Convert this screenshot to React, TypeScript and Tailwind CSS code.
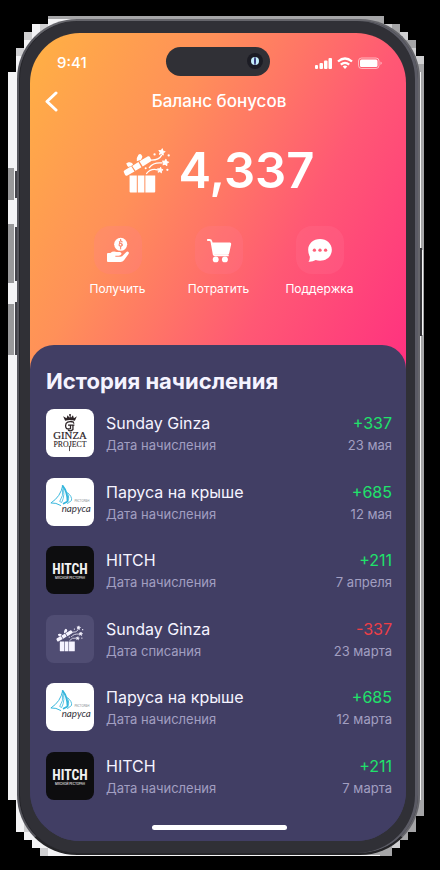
import type { ReactNode } from "react";

type Brand = "ginza" | "parusa" | "hitch" | "gift";

const history: { brand: Brand; name: string; note: string; amount: string; date: string }[] = [
  { brand: "ginza", name: "Sunday Ginza", note: "Дата начисления", amount: "+337", date: "23 мая" },
  { brand: "parusa", name: "Паруса на крыше", note: "Дата начисления", amount: "+685", date: "12 мая" },
  { brand: "hitch", name: "HITCH", note: "Дата начисления", amount: "+211", date: "7 апреля" },
  { brand: "gift", name: "Sunday Ginza", note: "Дата списания", amount: "-337", date: "23 марта" },
  { brand: "parusa", name: "Паруса на крыше", note: "Дата начисления", amount: "+685", date: "12 марта" },
  { brand: "hitch", name: "HITCH", note: "Дата начисления", amount: "+211", date: "7 марта" },
];

function Star({ x, y, r }: { x: number; y: number; r: number }) {
  return (
    <path
      transform={`translate(${x} ${y}) rotate(10) scale(${r})`}
      d="M0-1 .28-.38.95-.31.45.15.59.81 0 .47-.59.81-.45.15-.95-.31-.28-.38Z"
      stroke="currentColor"
      strokeWidth=".3"
      strokeLinejoin="round"
    />
  );
}

function GiftIcon({ className }: { className: string }) {
  return (
    <svg viewBox="126 48 146 140" className={className} fill="currentColor" aria-hidden="true">
      <path d="M146 133h22v52h-19q-3 0-3-3ZM171 133h20v52h-20ZM194 133h30v49q0 3-3 3h-27Z" />
      <path d="M131 117 151 105 161 121 138 134Q134 135 132 131L128 122Q128 119 131 117ZM154 104 173 92 182 108 164 119ZM176 90 202 75Q206 74 208 77L212 86Q213 89 210 91L186 106Z" />
      <path d="M157 99Q151 91 143 93L136 96 138 102 142 107 151 104ZM168 90Q166 79 173 70 178 65 182 70L185 76 181 85Z" />
      <path d="M208 86Q235 88 243 72M206 109Q219 92 245 95M198 127Q210 111 231 116" fill="none" stroke="currentColor" strokeWidth="4" strokeLinecap="round" />
      <Star x={244} y={62} r={10} />
      <Star x={255} y={94} r={10} />
      <Star x={239} y={117} r={9} />
      <circle cx="222" cy="69" r="3.5" />
      <circle cx="265" cy="72" r="3.5" />
      <circle cx="261" cy="116" r="3.5" />
      <circle cx="195" cy="111" r="3" />
    </svg>
  );
}

function HandCoinIcon() {
  return (
    <svg viewBox="78 66 72 78" className="h-[26px] w-6" fill="currentColor" aria-hidden="true">
      <circle cx="122" cy="88" r="19.5" />
      <path d="M127 80Q121 75 118 80 117 84 123 86 129 89 126 93 122 95 117 92M122 73V78M122 95V102M118 85Q114 90 121 93M126 91Q130 86 123 83" fill="none" stroke="#fb8369" strokeWidth="3" strokeLinecap="round" />
      <path d="M81 117Q81 114 84 114H91Q99 107 110 111H120Q126 113 124 118 122 122 116 122H106V125H121Q127 125 130 120L139 111Q143 108 146 112 148 114 145 118L132 136Q128 141 122 141H84Q81 141 81 138Z" />
    </svg>
  );
}

function CartIcon() {
  return (
    <svg viewBox="378 67 78 76" className="h-[25px] w-[26px]" aria-hidden="true">
      <path d="M383 73H388Q393 73 394 78L401 117Q402 120 406 120H444" fill="none" stroke="currentColor" strokeWidth="5.5" strokeLinecap="round" />
      <path d="M395 81H450Q455 81 454 86L448 113Q447 118 442 118H402Z" fill="currentColor" />
      <circle cx="407" cy="132" r="9" fill="currentColor" />
      <circle cx="435" cy="132" r="9" fill="currentColor" />
    </svg>
  );
}

function ChatIcon() {
  return (
    <svg viewBox="681 67 78 76" className="h-[25px] w-[26px]" aria-hidden="true">
      <path d="M720 70C740 70 756 84 756 103S741 136 720 136Q713 136 707 134 697 140 685 139 690 132 689 123 684 115 684 103C684 84 700 70 720 70Z" fill="currentColor" />
      <g fill="#ff6078">
        <circle cx="703" cy="104" r="5" />
        <circle cx="720" cy="104" r="5" />
        <circle cx="737" cy="104" r="5" />
      </g>
    </svg>
  );
}

function GinzaLogo() {
  return (
    <svg viewBox="0 0 49 49" className="size-full" fill="#2b2225" aria-label="Ginza Project" role="img">
      <path d="M19.5 12 17.5 7.5 21 9.5 22 6.5 24 9 24.5 5 25.5 9 27.5 6.5 28.5 9.5 31.5 7.5 29.5 12Q24.5 10.5 19.5 12Z" />
      <circle cx="24.5" cy="6" r="1" />
      <path d="M28.5 13.5Q20 11.5 20 17 20 21.5 25 20V16.5H22.5M24 13Q28 12 28.5 15M25.5 16.5H29M27.5 16.5V21Q25 23.500 22.5 21.5" fill="none" stroke="#2b2225" strokeWidth="1.3" />
      <text x="24.5" y="31" fontSize="11" textAnchor="middle" fontFamily="Liberation Serif, serif" stroke="#2b2225" strokeWidth=".2">GINZA</text>
      <text x="24.5" y="39" fontSize="8" textAnchor="middle" fontFamily="Liberation Serif, serif" stroke="#2b2225" strokeWidth=".1">PROJECT</text>
      <path d="M24 38V43" stroke="#2b2225" strokeWidth=".8" />
    </svg>
  );
}

function ParusaLogo() {
  return (
    <svg viewBox="0 0 49 49" className="size-full" aria-label="Паруса" role="img">
      <g fill="none" stroke="#35b6dc" strokeLinecap="round" strokeLinejoin="round">
        <path d="M17 8Q15 19 5 25.5 10 25 15 28" strokeWidth="1" />
        <path d="M17 8Q22 14 22 24 20 25 18 26" strokeWidth="1.8" />
        <path d="M17 9Q20 17 16 25L14 24Q18 18 17 12" strokeWidth=".8" />
        <path d="M22 15Q27 19 26 23L22 26M22 16Q25 21 21 25" strokeWidth=".9" />
      </g>
      <text x="29" y="24" fontSize="3" fill="#8b9297" fontFamily="Lato, sans-serif">РЕСТОРАН</text>
      <text x="16" y="35" fontSize="10" fontStyle="italic" fill="#32333c" fontFamily="Lato, sans-serif">паруса</text>
    </svg>
  );
}

function HitchLogo() {
  return (
    <svg viewBox="0 0 49 49" className="size-full" fill="#f2f2f2" aria-label="Hitch" role="img">
      <text x="24.5" y="29" fontSize="14" fontWeight="700" textAnchor="middle" fontFamily="Liberation Sans Narrow, Roboto Condensed, Roboto, sans-serif">HITCH</text>
      <text x="24.5" y="34" fontSize="3" fontWeight="500" textAnchor="middle" fontFamily="Inter, sans-serif">МЯСНОЙ РЕСТОРАН</text>
    </svg>
  );
}

const tiles: Record<Brand, { color: string; art: ReactNode }> = {
  ginza: { color: "bg-white", art: <GinzaLogo /> },
  parusa: { color: "bg-white", art: <ParusaLogo /> },
  hitch: { color: "bg-[#0d0d0f]", art: <HitchLogo /> },
  gift: { color: "bg-[#504d73]", art: <GiftIcon className="h-[27px] w-7" /> },
};

function StatusIcons() {
  return (
    <svg viewBox="0 0 68 14" className="h-3.5 w-[68px]" fill="currentColor" aria-hidden="true">
      <rect x="0" y="9" width="3" height="4" rx="1" />
      <rect x="4.5" y="7" width="3.5" height="6" rx="1" />
      <rect x="9" y="4.5" width="3.5" height="8.5" rx="1" />
      <rect x="13.5" y="2" width="3.5" height="11" rx="1" />
      <g fill="none" stroke="currentColor" strokeWidth="2.3">
        <path d="M23 5.500Q30-.5 37 5.500" />
        <path d="M25.800 8.700Q30 5 34.200 8.700" />
      </g>
      <path d="M27.700 10.500Q30 8.700 32.300 10.500L30 13Z" />
      <rect x="43.5" y="2" width="20.5" height="10.5" rx="3" fill="none" stroke="currentColor" strokeOpacity=".55" />
      <rect x="45" y="3.5" width="17.5" height="7.5" rx="1.5" />
      <path d="M65.500 5.500Q68 7.200 65.500 9Z" opacity=".6" />
    </svg>
  );
}

/* Light edge and hardware buttons that show behind the handset. */
function DeviceEdge() {
  return (
    <svg viewBox="0 0 440 870" preserveAspectRatio="none" shapeRendering="crispEdges" className="absolute inset-0 size-full" aria-hidden="true">
      <path fill="#f3f3f5" d="M8 72H16V48H24V32H32V24H48V16H220V856H40V848H32V840H24V832H16V800H8Z" />
      <path fill="#a5a5a7" d="M48 16H384V24H400V32H408V40H416V56H424V816H416V832H408V840H400V848H392V856H220V19H48Z" />
      <path fill="#cfcfd1" d="M16 48H24V56H16ZM24 32H32V40H24ZM40 24H48V32H40ZM384 24H392V32H384ZM400 32H408V40H400ZM408 48H416V56H408ZM416 56H424V64H416ZM24 824H32V832H24ZM40 848H48V856H40ZM392 840H400V848H392Z" />
      <path fill="#98989a" d="M8 168H14V200H8ZM8 224H14V283H8ZM8 304H14V355H8Z" />
      <path fill="#424249" d="M15 171H17V198H15ZM15 227H17V281H15ZM15 302H17V355H15Z" />
      <path fill="#f5f5f5" d="M420 72H421V800H420ZM422 250H423V335H422ZM60 855H380V856H60Z" />
      <path fill="#333337" d="M420 248H422V336H420Z" />
    </svg>
  );
}

function Action({ label, children }: { label: string; children: ReactNode }) {
  return (
    <button type="button" className="flex flex-1 flex-col items-center gap-[7px] text-white">
      <span className="flex size-12 items-center justify-center rounded-2xl bg-[#ff7f9c]/20">{children}</span>
      <span className="text-[12px] leading-4 whitespace-nowrap">{label}</span>
    </button>
  );
}

export default function App() {
  return (
    <div className="relative min-h-screen bg-black pt-[19px] pr-5 pb-[15px] pl-[17px] font-['Inter','Noto_Sans',sans-serif]">
      <DeviceEdge />
      <div className="relative rounded-[60px] border-2 border-t-[#65656b] border-r-[#65656b] border-b-[#242427] border-l-[#55555c] bg-[#303036] pt-3 pr-3 pb-3 pl-[11px] shadow-[inset_-3px_0_0_#5b5b65,inset_1px_0_0_#25252a]">
        <main className="overflow-hidden rounded-[50px] bg-[#413e64] bg-[linear-gradient(118deg,#ffb143_0%,#ff9059_33%,#ff7566_50%,#ff5874_67%,#ff2f80_100%)] bg-[length:100%_350px] bg-no-repeat">
          <header className="grid h-14 grid-cols-[1fr_104px_1fr] items-center text-white">
            <time className="pt-1 pl-[27px] text-[15px] leading-5 font-medium">9:41</time>
            <div className="flex h-[29px] items-center justify-end rounded-full bg-[#303036] pr-[7px]">
              <div className="flex size-4 items-center justify-center rounded-full bg-[#1c1c24]">
                <div className="h-2 w-2 rounded-full border-x-3 border-x-[#c5effa] bg-[#34377b]" />
              </div>
            </div>
            <div className="flex justify-end pt-1 pr-[23px]">
              <StatusIcons />
            </div>
          </header>

          <div className="mt-px grid h-[22px] grid-cols-[42px_1fr_40px] items-center text-white">
            <button type="button" aria-label="Назад" className="flex justify-center">
              <svg viewBox="0 0 14 22" className="h-[22px] w-3.5" fill="none" stroke="currentColor" strokeWidth="3" strokeLinecap="round" strokeLinejoin="round" aria-hidden="true">
                <path d="M12 3 3 11.500 12 20" />
              </svg>
            </button>
            <h1 className="text-center text-[17px] leading-5 font-medium">Баланс бонусов</h1>
          </div>

          <div className="mt-[34px] flex h-12 items-center justify-center gap-2 pl-px text-white">
            <GiftIcon className="h-[47px] w-12" />
            <p className="pt-0.5 text-[49px] leading-[48px] font-semibold">4,337</p>
          </div>

          <nav aria-label="Действия" className="mt-8 flex pr-9 pl-[37px]">
            <Action label="Получить"><HandCoinIcon /></Action>
            <Action label="Потратить"><CartIcon /></Action>
            <Action label="Поддержка"><ChatIcon /></Action>
          </nav>

          <section aria-labelledby="history-title" className="mt-12 rounded-t-3xl bg-[#413e64] pt-[22px] pr-3.5 pb-[11px] pl-4 text-[#f5f3ff]">
            <h2 id="history-title" className="text-[22px] leading-7 font-bold">История начисления</h2>
            <ul className="mt-3.5 flex h-[391px] flex-col justify-between">
              {history.map((row, index) => (
                <li key={index} className="flex h-12 items-center gap-3">
                  <span className={`flex size-12 shrink-0 items-center justify-center overflow-hidden rounded-lg ${tiles[row.brand].color}`}>
                    {tiles[row.brand].art}
                  </span>
                  <div className="min-w-0 flex-1">
                    <p className="text-[16px] leading-6">{row.name}</p>
                    <p className="text-[13px] leading-5 text-[#a29fc1]">{row.note}</p>
                  </div>
                  <div className="text-right">
                    <p className={`text-[16px] leading-6 ${row.amount.startsWith("-") ? "text-[#ed3e47]" : "text-[#20e26b]"}`}>{row.amount}</p>
                    <p className="text-[13px] leading-5 text-[#a29fc1]">{row.date}</p>
                  </div>
                </li>
              ))}
            </ul>
            <div className="mx-auto mt-[25px] h-[5px] w-[135px] rounded-full bg-white" />
          </section>
        </main>
      </div>
    </div>
  );
}
